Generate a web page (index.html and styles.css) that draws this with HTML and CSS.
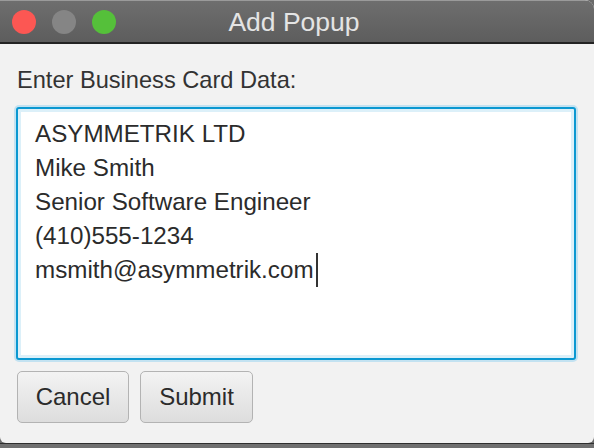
FILE: index.html
```html
<!DOCTYPE html>
<html>
<head>
<meta charset="utf-8">
<link rel="stylesheet" href="styles.css">
</head>
<body>
<div class="window">
  <div class="titlebar">
    <div class="lights">
      <span class="light red"></span>
      <span class="light gray"></span>
      <span class="light green"></span>
    </div>
    <div class="title">Add Popup</div>
  </div>
  <div class="content">
    <div class="label">Enter Business Card Data:</div>
    <div class="textarea">
      <div class="line">ASYMMETRIK LTD</div>
      <div class="line">Mike Smith</div>
      <div class="line">Senior Software Engineer</div>
      <div class="line">(410)555-1234</div>
      <div class="line">msmith@asymmetrik.com<span class="caret"></span></div>
    </div>
    <div class="buttons">
      <button class="btn btn-cancel">Cancel</button>
      <button class="btn btn-submit">Submit</button>
    </div>
  </div>
</div>
<div class="bottom-strip"></div>
</body>
</html>
```
FILE: styles.css
```css
html, body {
  margin: 0;
  padding: 0;
}
body {
  width: 594px;
  height: 448px;
  overflow: hidden;
  background: #6a6a6a;
  font-family: "Liberation Sans", Arial, sans-serif;
  display: flex;
  flex-direction: column;
}
.window {
  height: 443px;
  background: #f2f2f2;
  border-radius: 0 9px 6px 6px;
  display: flex;
  flex-direction: column;
  overflow: hidden;
  flex: none;
}
.bottom-strip {
  height: 5px;
  border-top: 1px solid #2e2e2e;
  background: #707070;
}
.titlebar {
  height: 41px;
  border-top: 1px solid #9a9a9a;
  border-bottom: 2px solid #232323;
  background: linear-gradient(#6e6e6e, #5d5d5d);
  position: relative;
  display: flex;
  align-items: center;
  justify-content: center;
  flex: none;
}
.lights {
  position: absolute;
  left: 12px;
  top: 9px;
  display: flex;
  gap: 16px;
}
.light {
  width: 24px;
  height: 24px;
  border-radius: 50%;
  display: block;
}
.red { background: #fc5753; }
.gray { background: #858585; }
.green { background: #55c03a; }
.title {
  color: #e4e4e4;
  font-size: 26.5px;
  line-height: 30px;
  margin-top: 1px;
  margin-left: -6px;
}
.content {
  padding: 24px 18px 0 16px;
  display: flex;
  flex-direction: column;
}
.label {
  font-size: 23.6px;
  line-height: 24px;
  color: #333;
  padding-left: 1px;
}
.textarea {
  box-sizing: border-box;
  margin-top: 15px;
  height: 253px;
  border: 2px solid #0b98d1;
  border-radius: 3px;
  background: #fff;
  box-shadow: 0 0 0 2px #c3e2f1, inset 0 0 0 3px #dcf0f9;
  padding: 8px 17px 0 17px;
  font-size: 24.2px;
  line-height: 34px;
  color: #2b2b2b;
}
.line {
  white-space: nowrap;
}
.caret {
  display: inline-block;
  width: 2px;
  height: 34px;
  background: #333;
  vertical-align: top;
  margin-left: 2px;
}
.buttons {
  margin-top: 11px;
  display: flex;
  gap: 11px;
  padding-left: 1px;
}
.btn {
  height: 52px;
  padding: 0;
  border: 1px solid #b3b3b3;
  border-radius: 5px;
  background: linear-gradient(#f3f3f3, #dddddd);
  font-family: "Liberation Sans", Arial, sans-serif;
  font-size: 24px;
  color: #2b2b2b;
  text-align: center;
}
.btn-cancel { width: 112px; }
.btn-submit { width: 113px; }
```
